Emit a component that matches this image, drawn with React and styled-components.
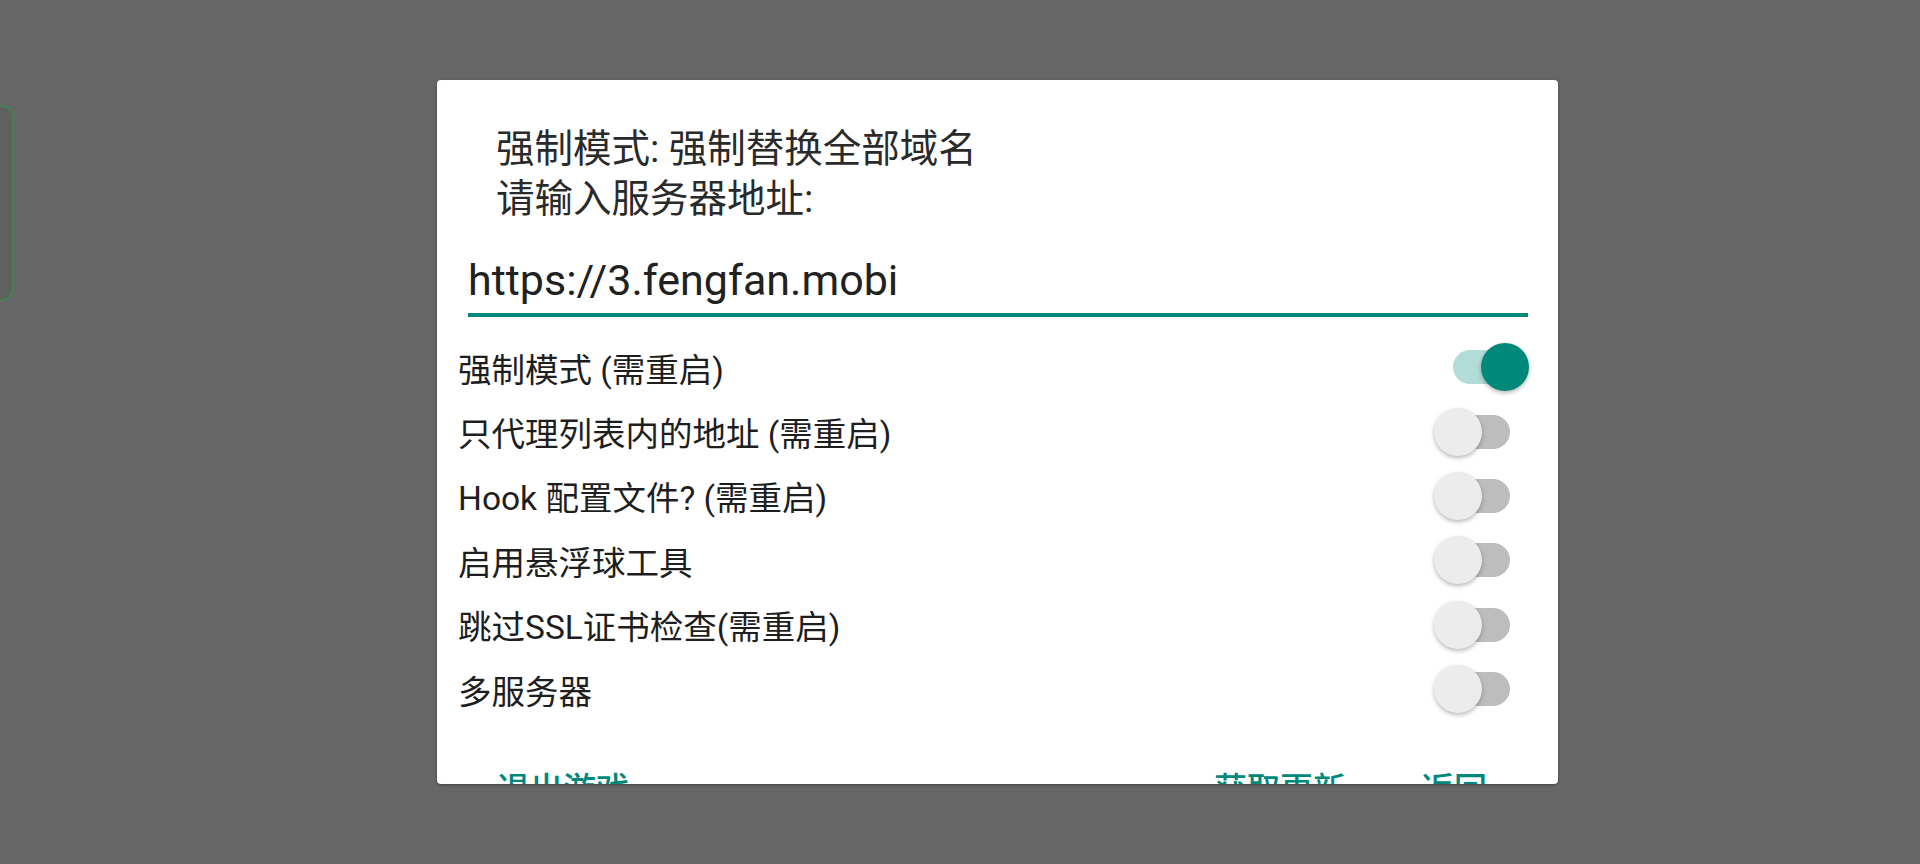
import React, { useState } from 'react';
import styled, { createGlobalStyle } from 'styled-components';

const GlobalStyle = createGlobalStyle`
  html, body {
    margin: 0;
    padding: 0;
    background: #666666;
    overflow: hidden;
  }
  body {
    font-family: 'Roboto', 'Noto Sans CJK SC', sans-serif;
  }
`;

const Page = styled.div`
  width: 1920px;
  height: 864px;
  display: flex;
  align-items: flex-start;
  background: #666666;
`;

const SideTab = styled.div`
  width: 12px;
  height: 192px;
  margin-top: 105px;
  background: #5f615f;
  border: 2px solid #467f58;
  border-left: none;
  border-radius: 0 12px 12px 0;
  flex-shrink: 0;
`;

const Dialog = styled.div`
  width: 1121px;
  height: 704px;
  margin: 80px 0 0 423px;
  background: #ffffff;
  border-radius: 4px;
  box-shadow: 0 1px 3px rgba(0, 0, 0, 0.35);
  overflow: hidden;
  display: flex;
  flex-direction: column;
  flex-shrink: 0;
`;

const Message = styled.div`
  margin-top: 44px;
  padding-left: 59px;
  font-size: 38.5px;
  line-height: 50px;
  color: #2a2a2a;
`;

const UrlField = styled.input`
  margin: 31px 30px 0 31px;
  padding: 0 0 8px 0;
  border: none;
  border-bottom: 4px solid #00897b;
  outline: none;
  background: transparent;
  font-family: 'Roboto', 'Noto Sans CJK SC', sans-serif;
  font-size: 43px;
  line-height: 50px;
  height: 50px;
  color: #212121;
`;

const OptionList = styled.div`
  margin-top: 18px;
  display: flex;
  flex-direction: column;
`;

const Row = styled.div`
  height: 64.4px;
  display: flex;
  align-items: center;
  justify-content: space-between;
  padding: 0 31px 0 21px;
`;

const Label = styled.span`
  font-size: 33.5px;
  color: #1e1e1e;
  white-space: nowrap;
`;

const Track = styled.div`
  position: relative;
  width: 74px;
  height: 34px;
  border-radius: 17px;
  margin-right: ${(p) => (p.$on ? '0' : '17px')};
  background: ${(p) => (p.$on ? '#b2dcd7' : '#bdbdbd')};
  cursor: pointer;
`;

const Thumb = styled.div`
  position: absolute;
  top: -7px;
  left: ${(p) => (p.$on ? '28px' : '-2px')};
  width: 48px;
  height: 48px;
  border-radius: 50%;
  background: ${(p) => (p.$on ? '#00897b' : '#ececec')};
  box-shadow: 0 2px 4px rgba(0, 0, 0, 0.28);
`;

const Actions = styled.div`
  margin-top: 49px;
  display: flex;
  align-items: flex-start;
  padding: 0 71px 0 60px;
  gap: 75px;
`;

const Spacer = styled.div`
  flex: 1;
`;

const ActionButton = styled.button`
  border: none;
  background: none;
  padding: 0;
  font-family: 'Roboto', 'Noto Sans CJK SC', sans-serif;
  font-size: 33px;
  line-height: 40px;
  font-weight: 500;
  color: #00897b;
  cursor: pointer;
`;

const options = [
  { label: '强制模式 (需重启)', on: true },
  { label: '只代理列表内的地址 (需重启)', on: false },
  { label: 'Hook 配置文件? (需重启)', on: false },
  { label: '启用悬浮球工具', on: false },
  { label: '跳过SSL证书检查(需重启)', on: false },
  { label: '多服务器', on: false },
];

const Switch = ({ on, onToggle }) => (
  <Track $on={on} onClick={onToggle}>
    <Thumb $on={on} />
  </Track>
);

const App = () => {
  const [url, setUrl] = useState('https://3.fengfan.mobi');
  const [states, setStates] = useState(options.map((o) => o.on));

  const toggle = (i) => {
    setStates((prev) => prev.map((v, k) => (k === i ? !v : v)));
  };

  return (
    <Page>
      <GlobalStyle />
      <SideTab />
      <Dialog>
        <Message>
          强制模式: 强制替换全部域名
          <br />
          请输入服务器地址:
        </Message>
        <UrlField value={url} onChange={(e) => setUrl(e.target.value)} />
        <OptionList>
          {options.map((opt, i) => (
            <Row key={opt.label}>
              <Label>{opt.label}</Label>
              <Switch on={states[i]} onToggle={() => toggle(i)} />
            </Row>
          ))}
        </OptionList>
        <Actions>
          <ActionButton>退出游戏</ActionButton>
          <Spacer />
          <ActionButton>获取更新</ActionButton>
          <ActionButton>返回</ActionButton>
        </Actions>
      </Dialog>
    </Page>
  );
};

export default App;
